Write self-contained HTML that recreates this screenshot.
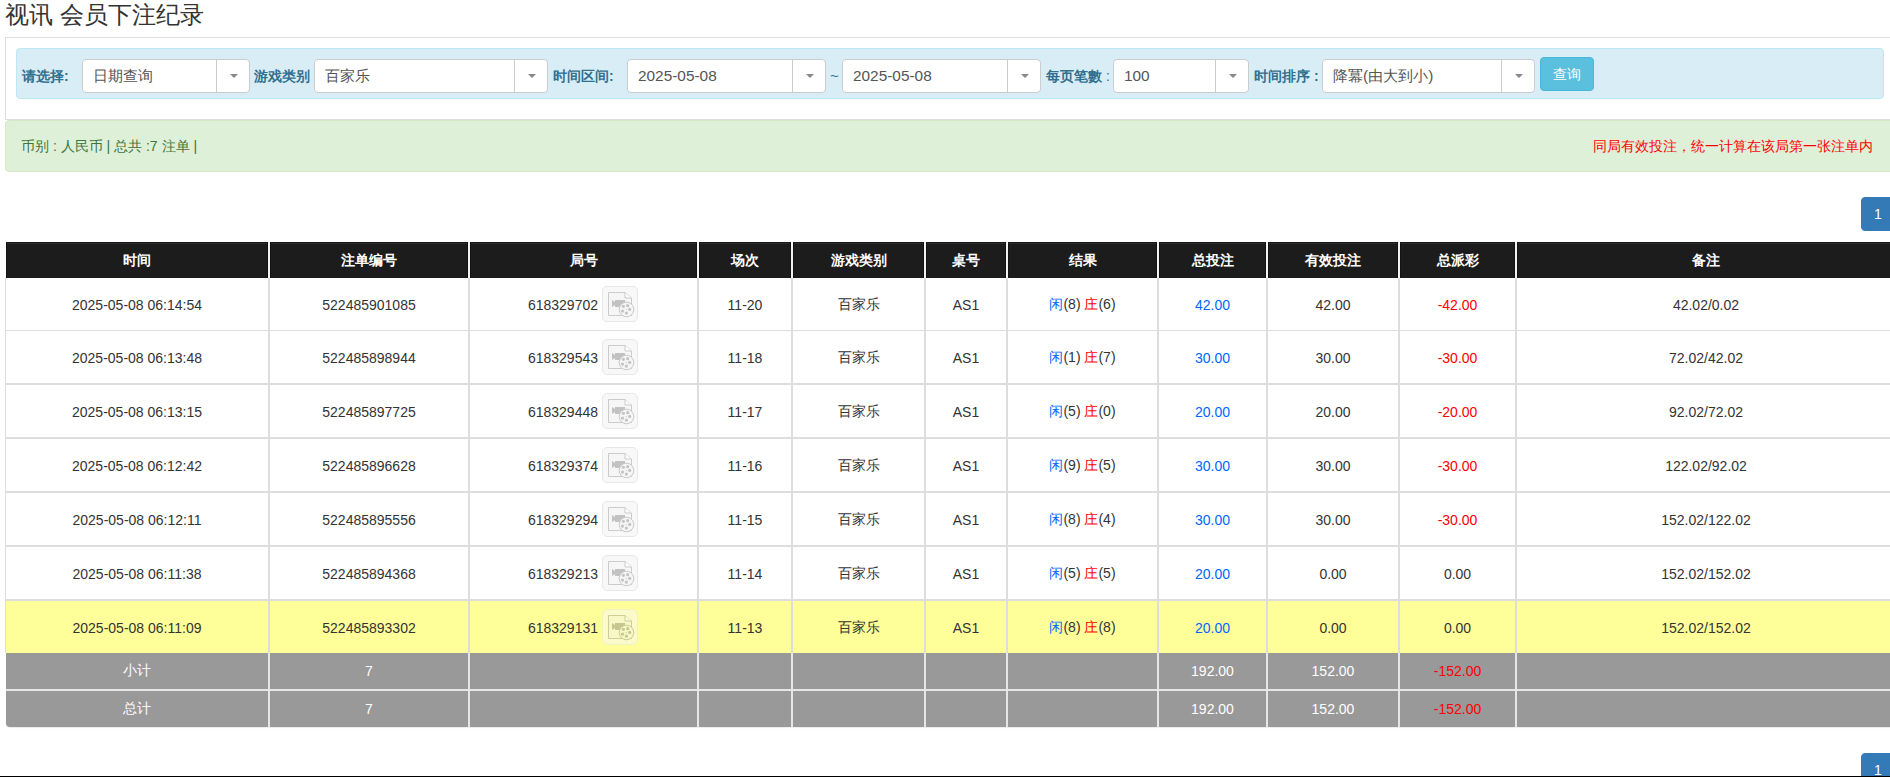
<!DOCTYPE html><html><head><meta charset="utf-8"><style>
*{box-sizing:border-box;margin:0;padding:0}
html,body{width:1890px;height:777px;overflow:hidden;background:#fff}
body{position:relative;font-family:"Liberation Sans",sans-serif;color:#333;font-size:14px}
.a{position:absolute}
.c{position:absolute;display:flex;align-items:center;justify-content:center;white-space:nowrap}
.sel{position:absolute;top:59px;height:34px;background:#fff;border:1px solid #ccc;border-radius:4px}
.sel .t{position:absolute;left:10px;top:0;height:32px;line-height:32px;font-size:15.4px;color:#555;white-space:nowrap}
.sel .d{position:absolute;right:32px;top:0;width:1px;height:32px;background:#ccc}
.sel .ar{position:absolute;right:11px;top:14px;width:0;height:0;border-left:4px solid transparent;border-right:4px solid transparent;border-top:4px solid #888}
.lb{position:absolute;top:62px;height:28px;line-height:28px;font-size:14px;font-weight:bold;color:#31708f;white-space:nowrap}
.pg{position:absolute;left:1861px;width:40px;height:34px;background:#337ab7;border:1px solid #337ab7;border-radius:4px 0 0 4px;color:#fff;font-size:14px;line-height:32px;padding-left:12px}
.hd{position:absolute;top:242px;height:36px;background:#1c1c1c;color:#fff;font-weight:bold;font-size:14px;display:flex;align-items:center;justify-content:center;border:1px solid #121212;border-top-color:#181818;border-bottom:0;box-shadow:inset 0 1px 0 #2a2a2a}
.ln{position:absolute;background:#ddd}
.ic{position:absolute;width:36px;height:36px;border:1px solid #e8e8e8;border-radius:5px;background:#f8f8f8}
.bl{color:#0066ff}.rd{color:#ff0000}
</style></head><body>
<div class="a" style="left:5px;top:0;height:30px;line-height:30px;font-size:24px;color:#333;white-space:nowrap">视讯 会员下注纪录</div>
<div class="a" style="left:5px;top:37px;width:1890px;height:83px;border:1px solid #ddd"></div>
<div class="a" style="left:16px;top:48px;width:1868px;height:51px;background:#d9edf7;border:1px solid #bce8f1;border-radius:4px"></div>
<div class="lb" style="left:22px">请选择:</div>
<div class="lb" style="left:254px">游戏类别</div>
<div class="lb" style="left:553px">时间区间:</div>
<div class="lb" style="left:1046px">每页笔數 <span style="font-weight:normal">:</span></div>
<div class="lb" style="left:1254px">时间排序 :</div>
<div class="lb" style="left:830px;font-weight:normal;font-size:15px">~</div>
<div class="sel" style="left:82px;width:168px"><div class="t">日期查询</div><div class="d"></div><div class="ar"></div></div>
<div class="sel" style="left:314px;width:234px"><div class="t">百家乐</div><div class="d"></div><div class="ar"></div></div>
<div class="sel" style="left:627px;width:199px"><div class="t">2025-05-08</div><div class="d"></div><div class="ar"></div></div>
<div class="sel" style="left:842px;width:199px"><div class="t">2025-05-08</div><div class="d"></div><div class="ar"></div></div>
<div class="sel" style="left:1113px;width:136px"><div class="t">100</div><div class="d"></div><div class="ar"></div></div>
<div class="sel" style="left:1322px;width:213px"><div class="t">降冪(由大到小)</div><div class="d"></div><div class="ar"></div></div>
<div class="a" style="left:1540px;top:57px;width:54px;height:34px;background:#5bc0de;border:1px solid #46b8da;border-radius:4px;color:#fff;font-size:14px;line-height:32px;text-align:center">查询</div>
<div class="a" style="left:5px;top:120px;width:1890px;height:52px;background:#dff0d8;border:1px solid #d6e9c6;border-radius:4px"></div>
<div class="a" style="left:21px;top:136px;height:20px;line-height:20px;font-size:14px;color:#3c763d;white-space:nowrap">币别 : 人民币 | 总共 :7 注单 |</div>
<div class="a" style="right:17px;top:136px;height:20px;line-height:20px;font-size:14px;color:#ff0000;white-space:nowrap">同局有效投注，统一计算在该局第一张注单内</div>
<div class="pg" style="top:197px">1</div>
<div class="pg" style="top:753px">1</div>
<div class="hd" style="left:6px;width:262px">时间</div>
<div class="hd" style="left:270px;width:198px">注单编号</div>
<div class="hd" style="left:470px;width:227px">局号</div>
<div class="hd" style="left:699px;width:92px">场次</div>
<div class="hd" style="left:793px;width:131px">游戏类别</div>
<div class="hd" style="left:926px;width:80px">桌号</div>
<div class="hd" style="left:1008px;width:149px">结果</div>
<div class="hd" style="left:1159px;width:107px">总投注</div>
<div class="hd" style="left:1268px;width:130px">有效投注</div>
<div class="hd" style="left:1400px;width:115px">总派彩</div>
<div class="hd" style="left:1517px;width:378px">备注</div>
<div class="a" style="left:6px;top:601px;width:1889px;height:52px;background:#ffff99"></div>
<div class="a" style="left:6px;top:653px;width:1889px;height:74px;background:#999;border-radius:0 0 0 4px;box-shadow:0 1px 1px rgba(0,0,0,.08)"></div>
<div class="ln" style="left:5px;top:330px;width:1890px;height:1px"></div>
<div class="ln" style="left:5px;top:383px;width:1890px;height:2px"></div>
<div class="ln" style="left:5px;top:437px;width:1890px;height:2px"></div>
<div class="ln" style="left:5px;top:491px;width:1890px;height:2px"></div>
<div class="ln" style="left:5px;top:545px;width:1890px;height:2px"></div>
<div class="ln" style="left:5px;top:599px;width:1890px;height:2px"></div>
<div class="a" style="left:6px;top:689px;width:1889px;height:2px;background:#e6e6e6"></div>
<div class="ln" style="left:5px;top:278px;width:1px;height:375px"></div>
<div class="ln" style="left:268px;top:278px;width:2px;height:375px"></div>
<div class="a" style="left:268px;top:653px;width:2px;height:74px;background:#e6e6e6"></div>
<div class="a" style="left:268px;top:242px;width:2px;height:36px;background:#f2f2f2"></div>
<div class="ln" style="left:468px;top:278px;width:2px;height:375px"></div>
<div class="a" style="left:468px;top:653px;width:2px;height:74px;background:#e6e6e6"></div>
<div class="a" style="left:468px;top:242px;width:2px;height:36px;background:#f2f2f2"></div>
<div class="ln" style="left:697px;top:278px;width:2px;height:375px"></div>
<div class="a" style="left:697px;top:653px;width:2px;height:74px;background:#e6e6e6"></div>
<div class="a" style="left:697px;top:242px;width:2px;height:36px;background:#f2f2f2"></div>
<div class="ln" style="left:791px;top:278px;width:2px;height:375px"></div>
<div class="a" style="left:791px;top:653px;width:2px;height:74px;background:#e6e6e6"></div>
<div class="a" style="left:791px;top:242px;width:2px;height:36px;background:#f2f2f2"></div>
<div class="ln" style="left:924px;top:278px;width:2px;height:375px"></div>
<div class="a" style="left:924px;top:653px;width:2px;height:74px;background:#e6e6e6"></div>
<div class="a" style="left:924px;top:242px;width:2px;height:36px;background:#f2f2f2"></div>
<div class="ln" style="left:1006px;top:278px;width:2px;height:375px"></div>
<div class="a" style="left:1006px;top:653px;width:2px;height:74px;background:#e6e6e6"></div>
<div class="a" style="left:1006px;top:242px;width:2px;height:36px;background:#f2f2f2"></div>
<div class="ln" style="left:1157px;top:278px;width:2px;height:375px"></div>
<div class="a" style="left:1157px;top:653px;width:2px;height:74px;background:#e6e6e6"></div>
<div class="a" style="left:1157px;top:242px;width:2px;height:36px;background:#f2f2f2"></div>
<div class="ln" style="left:1266px;top:278px;width:2px;height:375px"></div>
<div class="a" style="left:1266px;top:653px;width:2px;height:74px;background:#e6e6e6"></div>
<div class="a" style="left:1266px;top:242px;width:2px;height:36px;background:#f2f2f2"></div>
<div class="ln" style="left:1398px;top:278px;width:2px;height:375px"></div>
<div class="a" style="left:1398px;top:653px;width:2px;height:74px;background:#e6e6e6"></div>
<div class="a" style="left:1398px;top:242px;width:2px;height:36px;background:#f2f2f2"></div>
<div class="ln" style="left:1515px;top:278px;width:2px;height:375px"></div>
<div class="a" style="left:1515px;top:653px;width:2px;height:74px;background:#e6e6e6"></div>
<div class="a" style="left:1515px;top:242px;width:2px;height:36px;background:#f2f2f2"></div>
<div class="c" style="left:6px;top:279px;width:262px;height:52px"><span>2025-05-08 06:14:54</span></div>
<div class="c" style="left:270px;top:279px;width:198px;height:52px"><span>522485901085</span></div>
<div class="a" style="left:470px;top:279px;width:128px;height:52px;line-height:52px;text-align:right">618329702</div>
<div class="ic" style="left:602px;top:286px"><svg width="36" height="36" viewBox="0 0 36 36" style="position:absolute;left:-1px;top:-1px"><path d="M6.5 6.5H23L29.5 12V29.5H6.5Z" fill="#f6f6f6" stroke="#cbcbcb" stroke-width="1"/><path d="M23 6.5V12H29.5" fill="#fdfdfd" stroke="#cbcbcb" stroke-width="1"/><path d="M10 14L13 16V14H23V21H13V19L10 21Z" fill="#c2c2c2"/><circle cx="24.5" cy="23.5" r="7.3" fill="#f6f6f6" stroke="#c8c8c8" stroke-width="1"/><circle cx="21.4" cy="20.3" r="1.6" fill="#c4c4c4"/><circle cx="25.7" cy="19.7" r="1.6" fill="#c4c4c4"/><circle cx="27.7" cy="23.4" r="1.6" fill="#c4c4c4"/><circle cx="24.4" cy="27.1" r="1.6" fill="#c4c4c4"/><circle cx="20.5" cy="25.1" r="1.6" fill="#c4c4c4"/><circle cx="24.2" cy="23.4" r="0.6" fill="#c8c8c8"/></svg></div>
<div class="c" style="left:699px;top:279px;width:92px;height:52px"><span>11-20</span></div>
<div class="c" style="left:793px;top:279px;width:131px;height:52px"><span>百家乐</span></div>
<div class="c" style="left:926px;top:279px;width:80px;height:52px"><span>AS1</span></div>
<div class="c" style="left:1008px;top:279px;width:149px;height:52px"><span><span class="bl">闲</span>(8) <span class="rd">庄</span>(6)</span></div>
<div class="c" style="left:1159px;top:279px;width:107px;height:52px"><span><span class="bl">42.00</span></span></div>
<div class="c" style="left:1268px;top:279px;width:130px;height:52px"><span>42.00</span></div>
<div class="c" style="left:1400px;top:279px;width:115px;height:52px"><span><span class="rd">-42.00</span></span></div>
<div class="c" style="left:1517px;top:279px;width:378px;height:52px"><span>42.02/0.02</span></div>
<div class="c" style="left:6px;top:332px;width:262px;height:52px"><span>2025-05-08 06:13:48</span></div>
<div class="c" style="left:270px;top:332px;width:198px;height:52px"><span>522485898944</span></div>
<div class="a" style="left:470px;top:332px;width:128px;height:52px;line-height:52px;text-align:right">618329543</div>
<div class="ic" style="left:602px;top:339px"><svg width="36" height="36" viewBox="0 0 36 36" style="position:absolute;left:-1px;top:-1px"><path d="M6.5 6.5H23L29.5 12V29.5H6.5Z" fill="#f6f6f6" stroke="#cbcbcb" stroke-width="1"/><path d="M23 6.5V12H29.5" fill="#fdfdfd" stroke="#cbcbcb" stroke-width="1"/><path d="M10 14L13 16V14H23V21H13V19L10 21Z" fill="#c2c2c2"/><circle cx="24.5" cy="23.5" r="7.3" fill="#f6f6f6" stroke="#c8c8c8" stroke-width="1"/><circle cx="21.4" cy="20.3" r="1.6" fill="#c4c4c4"/><circle cx="25.7" cy="19.7" r="1.6" fill="#c4c4c4"/><circle cx="27.7" cy="23.4" r="1.6" fill="#c4c4c4"/><circle cx="24.4" cy="27.1" r="1.6" fill="#c4c4c4"/><circle cx="20.5" cy="25.1" r="1.6" fill="#c4c4c4"/><circle cx="24.2" cy="23.4" r="0.6" fill="#c8c8c8"/></svg></div>
<div class="c" style="left:699px;top:332px;width:92px;height:52px"><span>11-18</span></div>
<div class="c" style="left:793px;top:332px;width:131px;height:52px"><span>百家乐</span></div>
<div class="c" style="left:926px;top:332px;width:80px;height:52px"><span>AS1</span></div>
<div class="c" style="left:1008px;top:332px;width:149px;height:52px"><span><span class="bl">闲</span>(1) <span class="rd">庄</span>(7)</span></div>
<div class="c" style="left:1159px;top:332px;width:107px;height:52px"><span><span class="bl">30.00</span></span></div>
<div class="c" style="left:1268px;top:332px;width:130px;height:52px"><span>30.00</span></div>
<div class="c" style="left:1400px;top:332px;width:115px;height:52px"><span><span class="rd">-30.00</span></span></div>
<div class="c" style="left:1517px;top:332px;width:378px;height:52px"><span>72.02/42.02</span></div>
<div class="c" style="left:6px;top:386px;width:262px;height:52px"><span>2025-05-08 06:13:15</span></div>
<div class="c" style="left:270px;top:386px;width:198px;height:52px"><span>522485897725</span></div>
<div class="a" style="left:470px;top:386px;width:128px;height:52px;line-height:52px;text-align:right">618329448</div>
<div class="ic" style="left:602px;top:393px"><svg width="36" height="36" viewBox="0 0 36 36" style="position:absolute;left:-1px;top:-1px"><path d="M6.5 6.5H23L29.5 12V29.5H6.5Z" fill="#f6f6f6" stroke="#cbcbcb" stroke-width="1"/><path d="M23 6.5V12H29.5" fill="#fdfdfd" stroke="#cbcbcb" stroke-width="1"/><path d="M10 14L13 16V14H23V21H13V19L10 21Z" fill="#c2c2c2"/><circle cx="24.5" cy="23.5" r="7.3" fill="#f6f6f6" stroke="#c8c8c8" stroke-width="1"/><circle cx="21.4" cy="20.3" r="1.6" fill="#c4c4c4"/><circle cx="25.7" cy="19.7" r="1.6" fill="#c4c4c4"/><circle cx="27.7" cy="23.4" r="1.6" fill="#c4c4c4"/><circle cx="24.4" cy="27.1" r="1.6" fill="#c4c4c4"/><circle cx="20.5" cy="25.1" r="1.6" fill="#c4c4c4"/><circle cx="24.2" cy="23.4" r="0.6" fill="#c8c8c8"/></svg></div>
<div class="c" style="left:699px;top:386px;width:92px;height:52px"><span>11-17</span></div>
<div class="c" style="left:793px;top:386px;width:131px;height:52px"><span>百家乐</span></div>
<div class="c" style="left:926px;top:386px;width:80px;height:52px"><span>AS1</span></div>
<div class="c" style="left:1008px;top:386px;width:149px;height:52px"><span><span class="bl">闲</span>(5) <span class="rd">庄</span>(0)</span></div>
<div class="c" style="left:1159px;top:386px;width:107px;height:52px"><span><span class="bl">20.00</span></span></div>
<div class="c" style="left:1268px;top:386px;width:130px;height:52px"><span>20.00</span></div>
<div class="c" style="left:1400px;top:386px;width:115px;height:52px"><span><span class="rd">-20.00</span></span></div>
<div class="c" style="left:1517px;top:386px;width:378px;height:52px"><span>92.02/72.02</span></div>
<div class="c" style="left:6px;top:440px;width:262px;height:52px"><span>2025-05-08 06:12:42</span></div>
<div class="c" style="left:270px;top:440px;width:198px;height:52px"><span>522485896628</span></div>
<div class="a" style="left:470px;top:440px;width:128px;height:52px;line-height:52px;text-align:right">618329374</div>
<div class="ic" style="left:602px;top:447px"><svg width="36" height="36" viewBox="0 0 36 36" style="position:absolute;left:-1px;top:-1px"><path d="M6.5 6.5H23L29.5 12V29.5H6.5Z" fill="#f6f6f6" stroke="#cbcbcb" stroke-width="1"/><path d="M23 6.5V12H29.5" fill="#fdfdfd" stroke="#cbcbcb" stroke-width="1"/><path d="M10 14L13 16V14H23V21H13V19L10 21Z" fill="#c2c2c2"/><circle cx="24.5" cy="23.5" r="7.3" fill="#f6f6f6" stroke="#c8c8c8" stroke-width="1"/><circle cx="21.4" cy="20.3" r="1.6" fill="#c4c4c4"/><circle cx="25.7" cy="19.7" r="1.6" fill="#c4c4c4"/><circle cx="27.7" cy="23.4" r="1.6" fill="#c4c4c4"/><circle cx="24.4" cy="27.1" r="1.6" fill="#c4c4c4"/><circle cx="20.5" cy="25.1" r="1.6" fill="#c4c4c4"/><circle cx="24.2" cy="23.4" r="0.6" fill="#c8c8c8"/></svg></div>
<div class="c" style="left:699px;top:440px;width:92px;height:52px"><span>11-16</span></div>
<div class="c" style="left:793px;top:440px;width:131px;height:52px"><span>百家乐</span></div>
<div class="c" style="left:926px;top:440px;width:80px;height:52px"><span>AS1</span></div>
<div class="c" style="left:1008px;top:440px;width:149px;height:52px"><span><span class="bl">闲</span>(9) <span class="rd">庄</span>(5)</span></div>
<div class="c" style="left:1159px;top:440px;width:107px;height:52px"><span><span class="bl">30.00</span></span></div>
<div class="c" style="left:1268px;top:440px;width:130px;height:52px"><span>30.00</span></div>
<div class="c" style="left:1400px;top:440px;width:115px;height:52px"><span><span class="rd">-30.00</span></span></div>
<div class="c" style="left:1517px;top:440px;width:378px;height:52px"><span>122.02/92.02</span></div>
<div class="c" style="left:6px;top:494px;width:262px;height:52px"><span>2025-05-08 06:12:11</span></div>
<div class="c" style="left:270px;top:494px;width:198px;height:52px"><span>522485895556</span></div>
<div class="a" style="left:470px;top:494px;width:128px;height:52px;line-height:52px;text-align:right">618329294</div>
<div class="ic" style="left:602px;top:501px"><svg width="36" height="36" viewBox="0 0 36 36" style="position:absolute;left:-1px;top:-1px"><path d="M6.5 6.5H23L29.5 12V29.5H6.5Z" fill="#f6f6f6" stroke="#cbcbcb" stroke-width="1"/><path d="M23 6.5V12H29.5" fill="#fdfdfd" stroke="#cbcbcb" stroke-width="1"/><path d="M10 14L13 16V14H23V21H13V19L10 21Z" fill="#c2c2c2"/><circle cx="24.5" cy="23.5" r="7.3" fill="#f6f6f6" stroke="#c8c8c8" stroke-width="1"/><circle cx="21.4" cy="20.3" r="1.6" fill="#c4c4c4"/><circle cx="25.7" cy="19.7" r="1.6" fill="#c4c4c4"/><circle cx="27.7" cy="23.4" r="1.6" fill="#c4c4c4"/><circle cx="24.4" cy="27.1" r="1.6" fill="#c4c4c4"/><circle cx="20.5" cy="25.1" r="1.6" fill="#c4c4c4"/><circle cx="24.2" cy="23.4" r="0.6" fill="#c8c8c8"/></svg></div>
<div class="c" style="left:699px;top:494px;width:92px;height:52px"><span>11-15</span></div>
<div class="c" style="left:793px;top:494px;width:131px;height:52px"><span>百家乐</span></div>
<div class="c" style="left:926px;top:494px;width:80px;height:52px"><span>AS1</span></div>
<div class="c" style="left:1008px;top:494px;width:149px;height:52px"><span><span class="bl">闲</span>(8) <span class="rd">庄</span>(4)</span></div>
<div class="c" style="left:1159px;top:494px;width:107px;height:52px"><span><span class="bl">30.00</span></span></div>
<div class="c" style="left:1268px;top:494px;width:130px;height:52px"><span>30.00</span></div>
<div class="c" style="left:1400px;top:494px;width:115px;height:52px"><span><span class="rd">-30.00</span></span></div>
<div class="c" style="left:1517px;top:494px;width:378px;height:52px"><span>152.02/122.02</span></div>
<div class="c" style="left:6px;top:548px;width:262px;height:52px"><span>2025-05-08 06:11:38</span></div>
<div class="c" style="left:270px;top:548px;width:198px;height:52px"><span>522485894368</span></div>
<div class="a" style="left:470px;top:548px;width:128px;height:52px;line-height:52px;text-align:right">618329213</div>
<div class="ic" style="left:602px;top:555px"><svg width="36" height="36" viewBox="0 0 36 36" style="position:absolute;left:-1px;top:-1px"><path d="M6.5 6.5H23L29.5 12V29.5H6.5Z" fill="#f6f6f6" stroke="#cbcbcb" stroke-width="1"/><path d="M23 6.5V12H29.5" fill="#fdfdfd" stroke="#cbcbcb" stroke-width="1"/><path d="M10 14L13 16V14H23V21H13V19L10 21Z" fill="#c2c2c2"/><circle cx="24.5" cy="23.5" r="7.3" fill="#f6f6f6" stroke="#c8c8c8" stroke-width="1"/><circle cx="21.4" cy="20.3" r="1.6" fill="#c4c4c4"/><circle cx="25.7" cy="19.7" r="1.6" fill="#c4c4c4"/><circle cx="27.7" cy="23.4" r="1.6" fill="#c4c4c4"/><circle cx="24.4" cy="27.1" r="1.6" fill="#c4c4c4"/><circle cx="20.5" cy="25.1" r="1.6" fill="#c4c4c4"/><circle cx="24.2" cy="23.4" r="0.6" fill="#c8c8c8"/></svg></div>
<div class="c" style="left:699px;top:548px;width:92px;height:52px"><span>11-14</span></div>
<div class="c" style="left:793px;top:548px;width:131px;height:52px"><span>百家乐</span></div>
<div class="c" style="left:926px;top:548px;width:80px;height:52px"><span>AS1</span></div>
<div class="c" style="left:1008px;top:548px;width:149px;height:52px"><span><span class="bl">闲</span>(5) <span class="rd">庄</span>(5)</span></div>
<div class="c" style="left:1159px;top:548px;width:107px;height:52px"><span><span class="bl">20.00</span></span></div>
<div class="c" style="left:1268px;top:548px;width:130px;height:52px"><span>0.00</span></div>
<div class="c" style="left:1400px;top:548px;width:115px;height:52px"><span>0.00</span></div>
<div class="c" style="left:1517px;top:548px;width:378px;height:52px"><span>152.02/152.02</span></div>
<div class="c" style="left:6px;top:602px;width:262px;height:52px"><span>2025-05-08 06:11:09</span></div>
<div class="c" style="left:270px;top:602px;width:198px;height:52px"><span>522485893302</span></div>
<div class="a" style="left:470px;top:602px;width:128px;height:52px;line-height:52px;text-align:right">618329131</div>
<div class="ic" style="left:602px;top:609px;background:#fafacb;border-color:#f2f2bc"><svg width="36" height="36" viewBox="0 0 36 36" style="position:absolute;left:-1px;top:-1px"><path d="M6.5 6.5H23L29.5 12V29.5H6.5Z" fill="#f8f8c6" stroke="#cdcd96" stroke-width="1"/><path d="M23 6.5V12H29.5" fill="#fcfcd8" stroke="#cdcd96" stroke-width="1"/><path d="M10 14L13 16V14H23V21H13V19L10 21Z" fill="#c6c68e"/><circle cx="24.5" cy="23.5" r="7.3" fill="#f8f8c6" stroke="#caca92" stroke-width="1"/><circle cx="21.4" cy="20.3" r="1.6" fill="#c6c68e"/><circle cx="25.7" cy="19.7" r="1.6" fill="#c6c68e"/><circle cx="27.7" cy="23.4" r="1.6" fill="#c6c68e"/><circle cx="24.4" cy="27.1" r="1.6" fill="#c6c68e"/><circle cx="20.5" cy="25.1" r="1.6" fill="#c6c68e"/><circle cx="24.2" cy="23.4" r="0.6" fill="#caca92"/></svg></div>
<div class="c" style="left:699px;top:602px;width:92px;height:52px"><span>11-13</span></div>
<div class="c" style="left:793px;top:602px;width:131px;height:52px"><span>百家乐</span></div>
<div class="c" style="left:926px;top:602px;width:80px;height:52px"><span>AS1</span></div>
<div class="c" style="left:1008px;top:602px;width:149px;height:52px"><span><span class="bl">闲</span>(8) <span class="rd">庄</span>(8)</span></div>
<div class="c" style="left:1159px;top:602px;width:107px;height:52px"><span><span class="bl">20.00</span></span></div>
<div class="c" style="left:1268px;top:602px;width:130px;height:52px"><span>0.00</span></div>
<div class="c" style="left:1400px;top:602px;width:115px;height:52px"><span>0.00</span></div>
<div class="c" style="left:1517px;top:602px;width:378px;height:52px"><span>152.02/152.02</span></div>
<div class="c" style="left:6px;top:653px;width:262px;height:36px;color:#fff">小计</div>
<div class="c" style="left:270px;top:653px;width:198px;height:36px;color:#fff">7</div>
<div class="c" style="left:1159px;top:653px;width:107px;height:36px;color:#fff">192.00</div>
<div class="c" style="left:1268px;top:653px;width:130px;height:36px;color:#fff">152.00</div>
<div class="c" style="left:1400px;top:653px;width:115px;height:36px;color:#fff"><span class="rd">-152.00</span></div>
<div class="c" style="left:6px;top:691px;width:262px;height:36px;color:#fff">总计</div>
<div class="c" style="left:270px;top:691px;width:198px;height:36px;color:#fff">7</div>
<div class="c" style="left:1159px;top:691px;width:107px;height:36px;color:#fff">192.00</div>
<div class="c" style="left:1268px;top:691px;width:130px;height:36px;color:#fff">152.00</div>
<div class="c" style="left:1400px;top:691px;width:115px;height:36px;color:#fff"><span class="rd">-152.00</span></div>
<div class="a" style="left:0;top:776px;width:1890px;height:1px;background:#000"></div>
</body></html>
